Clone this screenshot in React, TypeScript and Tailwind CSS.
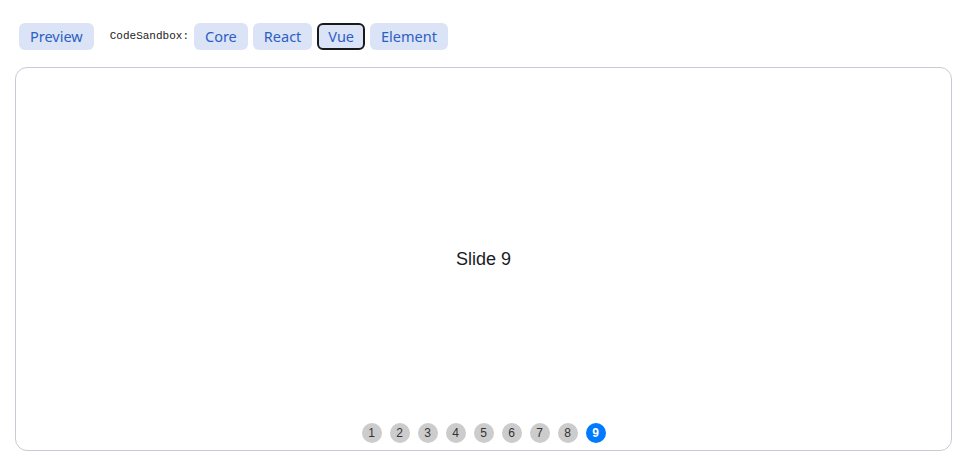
import { useState } from 'react';

const SANDBOXES = ['Core', 'React', 'Vue', 'Element'];

function TabButton({ label, active }: { label: string; active?: boolean }) {
  return (
    <button
      className={`h-[27px] px-[9px] rounded-md bg-[#dbe3f7] text-[#2c5fc2] text-[14.5px] leading-none ${
        active ? 'border-2 border-[#1a1a1a]' : 'border-2 border-transparent'
      }`}
    >
      {label}
    </button>
  );
}

export default function App() {
  const [current, setCurrent] = useState(9);

  return (
    <div className="w-[971px] h-[459px] bg-white px-[15px] pt-[23px] font-['Segoe_UI','Noto_Sans',sans-serif]">
      {/* Toolbar */}
      <div className="flex items-center ml-1 h-[27px]">
        <TabButton label="Preview" />
        <span className="ml-4 mr-[5px] text-[11px] text-[#222] font-['Liberation_Mono',monospace]">
          CodeSandbox:
        </span>
        <div className="flex gap-[5px]">
          {SANDBOXES.map((s) => (
            <TabButton key={s} label={s} active={s === 'Vue'} />
          ))}
        </div>
      </div>

      {/* Swiper */}
      <div className="relative mt-[17px] w-[937px] h-[384px] border border-[#c9cad3] rounded-xl flex items-center justify-center">
        <span className="text-[18px] text-[#1b1b1f] font-['Liberation_Sans',Arial,sans-serif]">
          Slide {current}
        </span>
        <div className="absolute left-0 right-0 bottom-[7px] flex justify-center gap-2">
          {Array.from({ length: 9 }, (_, i) => i + 1).map((n) => (
            <button
              key={n}
              onClick={() => setCurrent(n)}
              className={`w-5 h-5 rounded-full flex items-center justify-center text-[12px] font-['Liberation_Sans',Arial,sans-serif] ${
                n === current ? 'bg-[#007aff] text-white font-bold' : 'bg-[#cccccc] text-[#333]'
              }`}
            >
              {n}
            </button>
          ))}
        </div>
      </div>
    </div>
  );
}
